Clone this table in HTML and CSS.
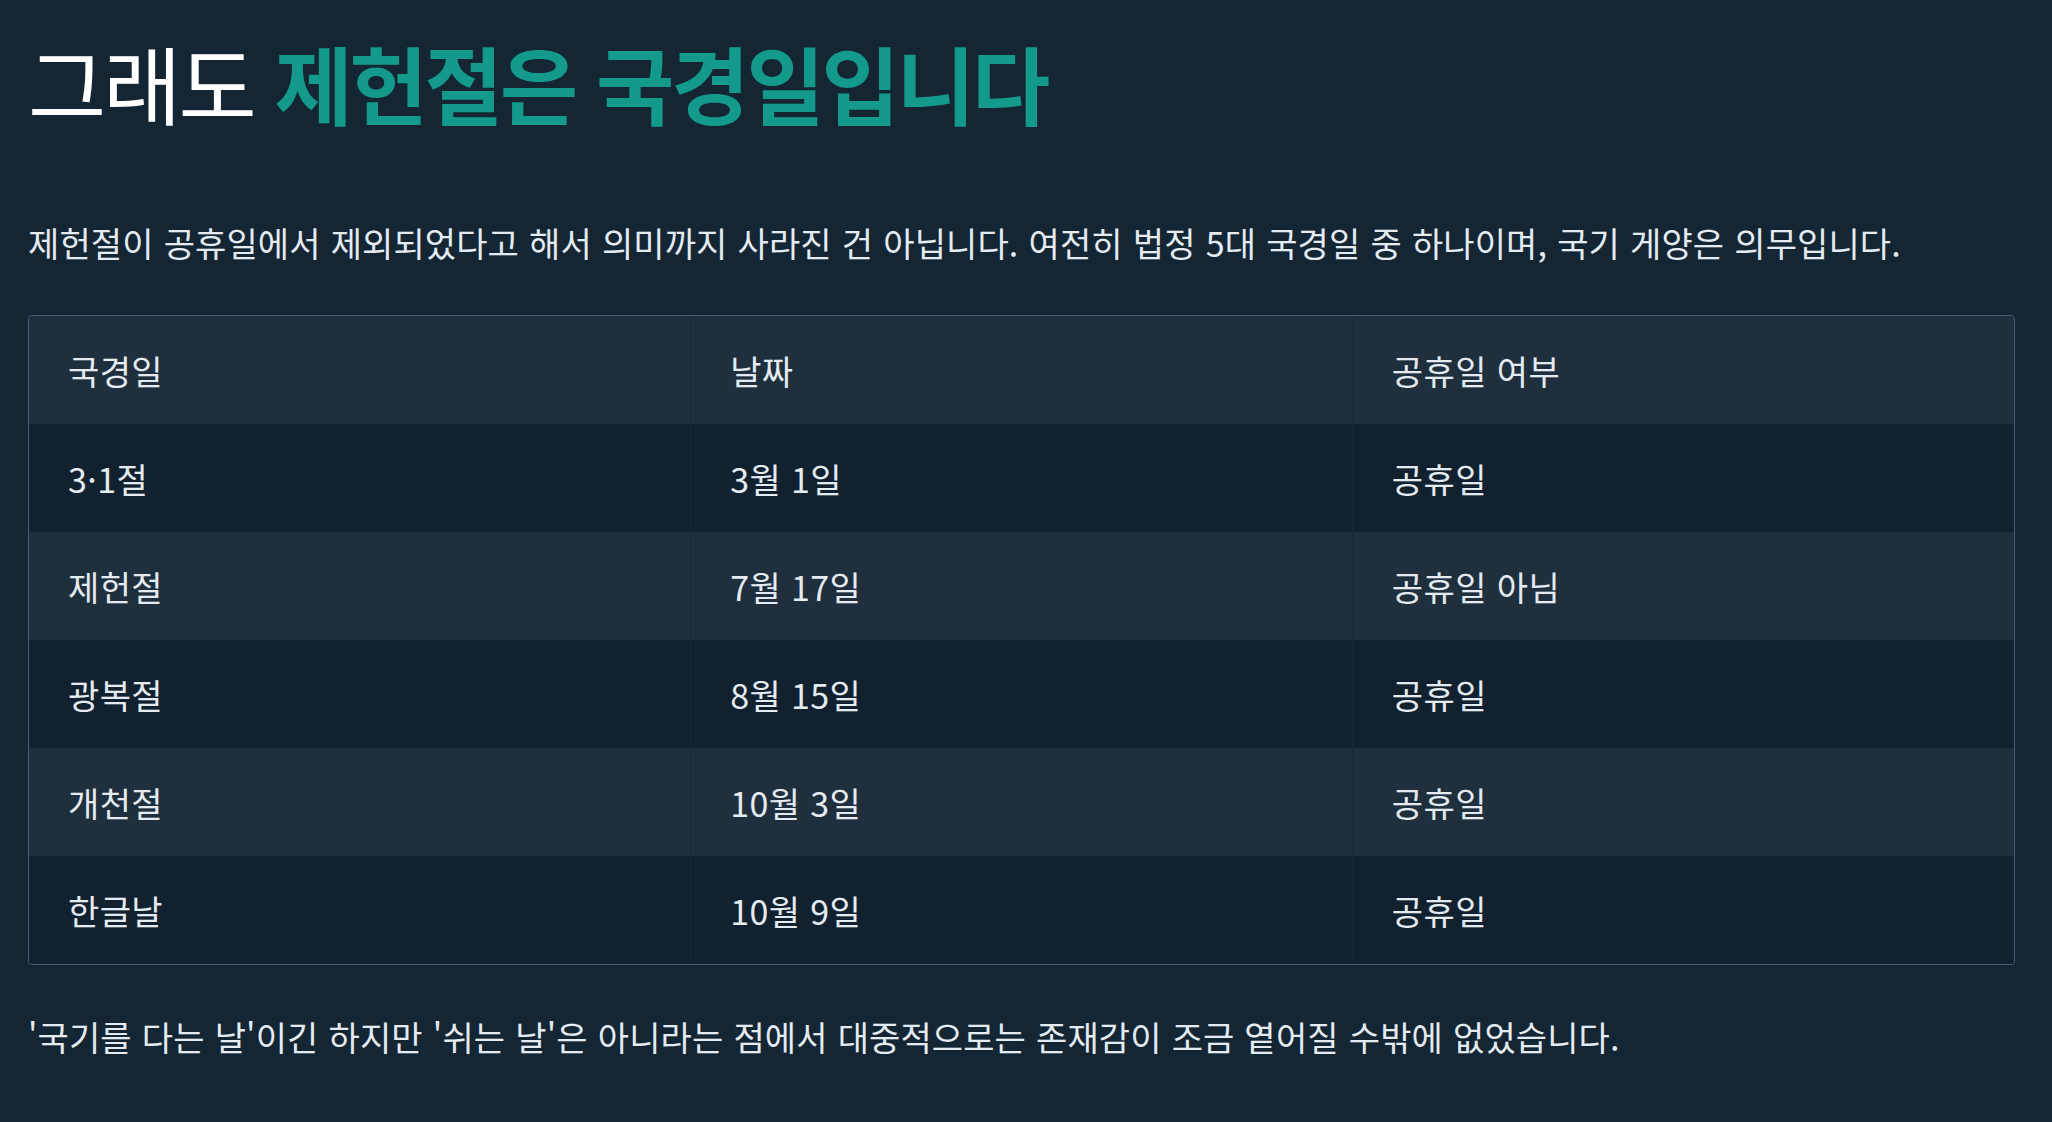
FILE: index.html
```html
<!DOCTYPE html>
<html lang="ko">
<head>
<meta charset="utf-8">
<link rel="stylesheet" href="styles.css">
</head>
<body>
<main class="page">
  <h1 class="title">그래도 <span class="accent">제헌절은 국경일입니다</span></h1>
  <p class="text lead">제헌절이 공휴일에서 제외되었다고 해서 의미까지 사라진 건 아닙니다. 여전히 법정 5대 국경일 중 하나이며, 국기 게양은 의무입니다.</p>
  <div class="table-wrap">
    <table class="holidays">
      <thead>
        <tr><th>국경일</th><th>날짜</th><th>공휴일 여부</th></tr>
      </thead>
      <tbody>
        <tr><td>3·1절</td><td>3월 1일</td><td>공휴일</td></tr>
        <tr><td>제헌절</td><td>7월 17일</td><td>공휴일 아님</td></tr>
        <tr><td>광복절</td><td>8월 15일</td><td>공휴일</td></tr>
        <tr><td>개천절</td><td>10월 3일</td><td>공휴일</td></tr>
        <tr><td>한글날</td><td>10월 9일</td><td>공휴일</td></tr>
      </tbody>
    </table>
  </div>
  <p class="text tail">'국기를 다는 날'이긴 하지만 '쉬는 날'은 아니라는 점에서 대중적으로는 존재감이 조금 옅어질 수밖에 없었습니다.</p>
</main>
</body>
</html>
```

FILE: styles.css
```css
html, body {
  margin: 0;
  padding: 0;
  background: #142534;
}

body {
  font-family: "Noto Sans CJK KR", "Noto Sans", sans-serif;
  color: #e4ebf1;
}

.page {
  padding: 35px 37px 40px 28px;
}

.title {
  margin: 0;
  font-size: 85px;
  line-height: 94px;
  font-weight: 400;
  letter-spacing: -3px;
  color: #ffffff;
}

.accent {
  color: #149a8b;
  font-weight: 700;
}

.text {
  margin: 0;
  font-size: 34px;
  line-height: 48px;
  letter-spacing: 0.1px;
  word-spacing: 0.5px;
}

.lead {
  margin-top: 90px;
}

.table-wrap {
  margin-top: 48px;
  border: 1px solid #4c5f6e;
  border-radius: 4px;
  overflow: hidden;
}

.holidays {
  width: 100%;
  border-collapse: collapse;
  table-layout: fixed;
}

.holidays th,
.holidays td {
  height: 108px;
  padding: 0 39px;
  text-align: left;
  font-size: 34px;
  font-weight: 400;
  letter-spacing: 0.4px;
  box-sizing: border-box;
}

.holidays th + th,
.holidays td + td {
  border-left: 1px solid #182836;
}

.holidays thead tr,
.holidays tbody tr:nth-child(even) {
  background: #1f2f3e;
}

.holidays tbody tr:nth-child(odd) {
  background: #12212f;
}

.tail {
  margin-top: 48px;
}
```
